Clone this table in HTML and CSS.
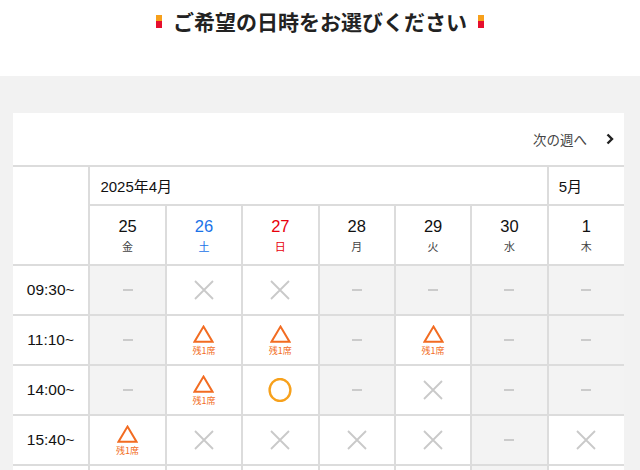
FILE: index.html
```html
<!DOCTYPE html>
<html lang="ja">
<head>
<meta charset="utf-8">
<title>日時選択</title>
<link rel="stylesheet" href="styles.css">
</head>
<body>
<header class="page-head">
  <h1 class="title"><span class="mark"></span><span class="title-text">ご希望の日時をお選びください</span><span class="mark"></span></h1>
</header>
<main class="main">
  <section class="card">
    <div class="card-nav">
      <a class="next" href="#">次の週へ<svg class="chev" width="8" height="12" viewBox="0 0 8 12"><path d="M1.5 1.5 L6 6 L1.5 10.5" fill="none" stroke="#222" stroke-width="2.4" stroke-linejoin="miter"/></svg></a>
    </div>
    <table class="cal">
      <colgroup><col><col><col><col><col><col><col><col></colgroup>
      <thead>
        <tr class="months">
          <th class="corner" rowspan="2"></th>
          <th class="month" colspan="6">2025年4月</th>
          <th class="month">5月</th>
        </tr>
        <tr class="days">
          <th class="day"><span class="num">25</span><span class="dow">金</span></th>
          <th class="day sat"><span class="num">26</span><span class="dow">土</span></th>
          <th class="day sun"><span class="num">27</span><span class="dow">日</span></th>
          <th class="day"><span class="num">28</span><span class="dow">月</span></th>
          <th class="day"><span class="num">29</span><span class="dow">火</span></th>
          <th class="day"><span class="num">30</span><span class="dow">水</span></th>
          <th class="day"><span class="num">1</span><span class="dow">木</span></th>
        </tr>
      </thead>
      <tbody>
        <tr class="slot">
          <th class="time">09:30~</th>
          <td class="na"><span class="dash"></span></td>
          <td class="full"><svg class="x" width="22" height="22" viewBox="0 0 22 22"><path d="M2 2 L20 20 M20 2 L2 20" stroke="#c9c9c9" stroke-width="1.8"/></svg></td>
          <td class="full"><svg class="x" width="22" height="22" viewBox="0 0 22 22"><path d="M2 2 L20 20 M20 2 L2 20" stroke="#c9c9c9" stroke-width="1.8"/></svg></td>
          <td class="na"><span class="dash"></span></td>
          <td class="na"><span class="dash"></span></td>
          <td class="na"><span class="dash"></span></td>
          <td class="na"><span class="dash"></span></td>
        </tr>
        <tr class="slot">
          <th class="time">11:10~</th>
          <td class="na"><span class="dash"></span></td>
          <td class="few"><svg class="tri" width="21" height="18" viewBox="0 0 21 18"><path d="M10.5 1.6 L19.5 16.8 L1.5 16.8 Z" fill="none" stroke="#f26c22" stroke-width="2"/></svg><span class="left">残1席</span></td>
          <td class="few"><svg class="tri" width="21" height="18" viewBox="0 0 21 18"><path d="M10.5 1.6 L19.5 16.8 L1.5 16.8 Z" fill="none" stroke="#f26c22" stroke-width="2"/></svg><span class="left">残1席</span></td>
          <td class="na"><span class="dash"></span></td>
          <td class="few"><svg class="tri" width="21" height="18" viewBox="0 0 21 18"><path d="M10.5 1.6 L19.5 16.8 L1.5 16.8 Z" fill="none" stroke="#f26c22" stroke-width="2"/></svg><span class="left">残1席</span></td>
          <td class="na"><span class="dash"></span></td>
          <td class="na"><span class="dash"></span></td>
        </tr>
        <tr class="slot">
          <th class="time">14:00~</th>
          <td class="na"><span class="dash"></span></td>
          <td class="few"><svg class="tri" width="21" height="18" viewBox="0 0 21 18"><path d="M10.5 1.6 L19.5 16.8 L1.5 16.8 Z" fill="none" stroke="#f26c22" stroke-width="2"/></svg><span class="left">残1席</span></td>
          <td class="open"><svg class="circ" width="24" height="24" viewBox="0 0 24 24"><ellipse cx="12" cy="12" rx="10.4" ry="11" fill="none" stroke="#f7a11c" stroke-width="2.4"/></svg></td>
          <td class="na"><span class="dash"></span></td>
          <td class="full"><svg class="x" width="22" height="22" viewBox="0 0 22 22"><path d="M2 2 L20 20 M20 2 L2 20" stroke="#c9c9c9" stroke-width="1.8"/></svg></td>
          <td class="na"><span class="dash"></span></td>
          <td class="na"><span class="dash"></span></td>
        </tr>
        <tr class="slot">
          <th class="time">15:40~</th>
          <td class="few"><svg class="tri" width="21" height="18" viewBox="0 0 21 18"><path d="M10.5 1.6 L19.5 16.8 L1.5 16.8 Z" fill="none" stroke="#f26c22" stroke-width="2"/></svg><span class="left">残1席</span></td>
          <td class="full"><svg class="x" width="22" height="22" viewBox="0 0 22 22"><path d="M2 2 L20 20 M20 2 L2 20" stroke="#c9c9c9" stroke-width="1.8"/></svg></td>
          <td class="full"><svg class="x" width="22" height="22" viewBox="0 0 22 22"><path d="M2 2 L20 20 M20 2 L2 20" stroke="#c9c9c9" stroke-width="1.8"/></svg></td>
          <td class="full"><svg class="x" width="22" height="22" viewBox="0 0 22 22"><path d="M2 2 L20 20 M20 2 L2 20" stroke="#c9c9c9" stroke-width="1.8"/></svg></td>
          <td class="full"><svg class="x" width="22" height="22" viewBox="0 0 22 22"><path d="M2 2 L20 20 M20 2 L2 20" stroke="#c9c9c9" stroke-width="1.8"/></svg></td>
          <td class="na"><span class="dash"></span></td>
          <td class="full"><svg class="x" width="22" height="22" viewBox="0 0 22 22"><path d="M2 2 L20 20 M20 2 L2 20" stroke="#c9c9c9" stroke-width="1.8"/></svg></td>
        </tr>
        <tr class="slot">
          <th class="time"></th>
          <td class="full"></td>
          <td class="full"></td>
          <td class="full"></td>
          <td class="full"></td>
          <td class="full"></td>
          <td class="na"></td>
          <td class="full"></td>
        </tr>
      </tbody>
    </table>
  </section>
</main>
</body>
</html>
```

FILE: styles.css
```css
html, body {
  margin: 0;
  padding: 0;
}
body {
  background: #f2f2f2;
  font-family: "Liberation Sans", "Noto Sans CJK JP", sans-serif;
  color: #111;
  overflow: hidden;
}
.page-head {
  background: #fff;
  height: 76px;
  box-sizing: border-box;
  padding-top: 9px;
}
.title {
  margin: 0;
  display: flex;
  justify-content: center;
  align-items: center;
  gap: 11px;
  font-family: "Noto Sans CJK JP", sans-serif;
  font-size: 21px;
  line-height: 24px;
  font-weight: 700;
  color: #222;
}
.mark {
  width: 6px;
  height: 13px;
  background: linear-gradient(#f7a01b 0 6px, #e60f2d 6px 13px);
}
.main {
  padding: 37px 16px 0 13px;
}
.card {
  background: #fff;
}
.card-nav {
  height: 52px;
  display: flex;
  justify-content: flex-end;
  align-items: center;
  padding-right: 10px;
}
.next {
  display: flex;
  align-items: center;
  gap: 19px;
  font-family: "Noto Sans CJK JP", sans-serif;
  font-size: 13.5px;
  color: #444;
  text-decoration: none;
}
.chev {
  display: block;
}
.cal {
  width: 100%;
  border-collapse: collapse;
  table-layout: fixed;
}
.cal th, .cal td {
  border: 2px solid #dcdcdc;
  padding: 0;
  text-align: center;
  vertical-align: middle;
}
.cal tr > :first-child {
  border-left: none;
}
.cal tr > :last-child {
  border-right: none;
}
.months {
  height: 39px;
}
.month {
  text-align: left !important;
  padding-left: 10px !important;
  font-size: 15px;
  font-weight: 400;
  color: #111;
}
.corner {
  border-left: none;
}
.days {
  height: 60px;
}
.day {
  font-weight: 400;
}
.num {
  display: block;
  font-size: 16.5px;
  line-height: 18px;
  color: #111;
}
.dow {
  display: block;
  margin-top: 4px;
  font-family: "Noto Sans CJK JP", sans-serif;
  font-size: 11px;
  line-height: 14px;
  color: #444;
}
.sat .num, .sat .dow {
  color: #1a73e8;
}
.sun .num, .sun .dow {
  color: #e8000b;
}
.slot {
  height: 50px;
}
.time {
  font-size: 15.5px;
  font-weight: 400;
  color: #111;
}
.na {
  background: #f3f3f3;
}
.dash {
  display: block;
  margin: 0 auto;
  width: 10px;
  height: 2px;
  background: #cbcbcb;
}
.x, .circ {
  display: block;
  margin: 0 auto;
}
.tri {
  display: block;
  margin: 0 auto;
}
.left {
  display: block;
  margin-top: 2px;
  font-family: "Noto Sans CJK JP", sans-serif;
  font-size: 9px;
  line-height: 11px;
  color: #f26c22;
}
```
